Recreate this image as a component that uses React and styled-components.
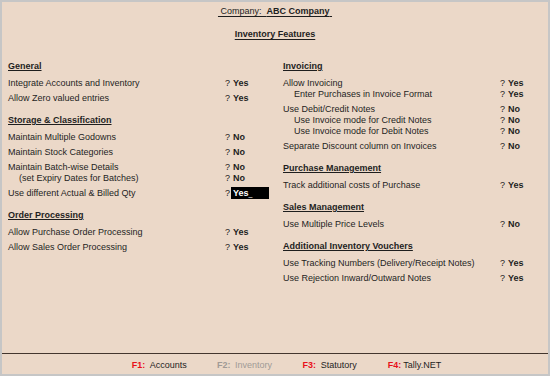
import React from 'react';
import styled, { createGlobalStyle } from 'styled-components';

const GlobalStyle = createGlobalStyle`
  html, body {
    margin: 0;
    padding: 0;
    background: #ebd8c8;
  }
  body {
    font-family: "Liberation Sans", Arial, sans-serif;
    font-size: 9px;
    color: #1e1e1e;
  }
`;

const Frame = styled.div`
  box-sizing: border-box;
  width: 550px;
  height: 376px;
  border: 2px solid #c6c6c6;
  background: #ebd8c8;
  display: flex;
  flex-direction: column;
`;

const Header = styled.header`
  display: flex;
  flex-direction: column;
  align-items: center;
  padding-top: 4px;
  line-height: 11px;
`;

const Company = styled.div`
  white-space: pre;
  text-decoration: underline;
  text-underline-offset: 2px;
  text-decoration-thickness: 1px;

  b {
    font-weight: bold;
  }
`;

const Title = styled.div`
  margin-top: 12px;
  font-weight: bold;
  text-decoration: underline;
  text-underline-offset: 2px;
  text-decoration-thickness: 1px;
`;

const Main = styled.main`
  flex: 1;
  display: grid;
  grid-template-columns: 275px 1fr;
  padding-left: 6px;
  margin-top: 21px;
  align-items: start;
`;

const Column = styled.div`
  display: flex;
  flex-direction: column;
  gap: 11px;
`;

const Section = styled.section`
  display: flex;
  flex-direction: column;
`;

const Heading = styled.div`
  font-weight: bold;
  line-height: 11px;
  margin-bottom: 6px;
  align-self: flex-start;
  text-decoration: underline;
  text-underline-offset: 1px;
  text-decoration-thickness: 1px;
`;

const List = styled.div`
  display: flex;
  flex-direction: column;
  gap: 4px;
`;

const Group = styled.div`
  display: flex;
  flex-direction: column;
`;

const Row = styled.div`
  display: grid;
  grid-template-columns: 217px 8px auto;
  line-height: 11px;
  height: 11px;
  white-space: nowrap;
`;

const Label = styled.span`
  padding-left: ${(p) => (p.$indent ? '11px' : '0')};
`;

const Ask = styled.span``;

const Value = styled.span`
  font-weight: bold;
  ${(p) =>
    p.$active &&
    `
    display: inline-block;
    width: 36px;
    height: 12px;
    margin: -1px 0 0 -2px;
    padding-left: 2px;
    line-height: 12px;
    background: #000;
    color: #fff;
  `}
`;

const Cursor = styled.span`
  font-weight: normal;
  font-size: 7px;
  vertical-align: baseline;
`;

const Footer = styled.footer`
  border-top: 1px solid #43362e;
  padding: 6px 0 3px 129.7px;
  display: flex;
  line-height: 11px;
`;

const FooterItem = styled.div`
  width: 85.4px;
  display: flex;
  color: ${(p) => (p.$disabled ? '#a09a96' : '#1e1e1e')};
`;

const Key = styled.span`
  font-weight: bold;
  color: ${(p) => (p.$disabled ? '#a09a96' : '#e8101a')};
  width: ${(p) => p.$w}px;
`;

const left = [
  {
    title: 'General',
    items: [
      [['Integrate Accounts and Inventory', 'Yes']],
      [['Allow Zero valued entries', 'Yes']],
    ],
  },
  {
    title: 'Storage & Classification',
    items: [
      [['Maintain Multiple Godowns', 'No']],
      [['Maintain Stock Categories', 'No']],
      [
        ['Maintain Batch-wise Details', 'No'],
        ['(set Expiry Dates for Batches)', 'No', true],
      ],
      [['Use different Actual & Billed Qty', 'Yes', false, true]],
    ],
  },
  {
    title: 'Order Processing',
    items: [
      [['Allow Purchase Order Processing', 'Yes']],
      [['Allow Sales Order Processing', 'Yes']],
    ],
  },
];

const right = [
  {
    title: 'Invoicing',
    items: [
      [
        ['Allow Invoicing', 'Yes'],
        ['Enter Purchases in Invoice Format', 'Yes', true],
      ],
      [
        ['Use Debit/Credit Notes', 'No'],
        ['Use Invoice mode for Credit Notes', 'No', true],
        ['Use Invoice mode for Debit Notes', 'No', true],
      ],
      [['Separate Discount column on Invoices', 'No']],
    ],
  },
  {
    title: 'Purchase Management',
    items: [[['Track additional costs of Purchase', 'Yes']]],
  },
  {
    title: 'Sales Management',
    items: [[['Use Multiple Price Levels', 'No']]],
  },
  {
    title: 'Additional Inventory Vouchers',
    items: [
      [['Use Tracking Numbers (Delivery/Receipt Notes)', 'Yes']],
      [['Use Rejection Inward/Outward Notes', 'Yes']],
    ],
  },
];

const keys = [
  { k: 'F1:', label: 'Accounts', w: 18 },
  { k: 'F2:', label: 'Inventory', w: 18, disabled: true },
  { k: 'F3:', label: 'Statutory', w: 18.3 },
  { k: 'F4:', label: 'Tally.NET', w: 15.5 },
];

function Sections({ data }) {
  return (
    <Column>
      {data.map((sec) => (
        <Section key={sec.title}>
          <Heading>{sec.title}</Heading>
          <List>
            {sec.items.map((group, gi) => (
              <Group key={gi}>
                {group.map(([label, value, indent, active]) => (
                  <Row key={label}>
                    <Label $indent={indent}>{label}</Label>
                    <Ask>?</Ask>
                    <span>
                      <Value $active={active}>
                        {value}
                        {active && <Cursor>_</Cursor>}
                      </Value>
                    </span>
                  </Row>
                ))}
              </Group>
            ))}
          </List>
        </Section>
      ))}
    </Column>
  );
}

export default function App() {
  return (
    <>
      <GlobalStyle />
      <Frame>
        <Header>
          <Company>
            {'\u00a0Company:\u00a0\u00a0'}
            <b>ABC Company</b>
            {'\u00a0'}
          </Company>
          <Title>Inventory Features</Title>
        </Header>
        <Main>
          <Sections data={left} />
          <Sections data={right} />
        </Main>
        <Footer>
          {keys.map((item) => (
            <FooterItem key={item.k} $disabled={item.disabled}>
              <Key $disabled={item.disabled} $w={item.w}>{item.k}</Key>
              <span>{item.label}</span>
            </FooterItem>
          ))}
        </Footer>
      </Frame>
    </>
  );
}
